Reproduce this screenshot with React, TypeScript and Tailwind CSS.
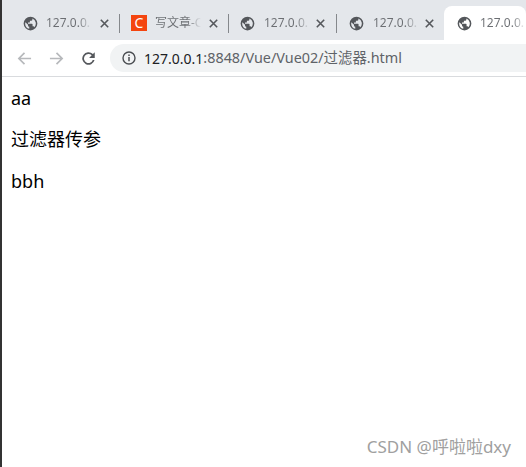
function Globe() {
  return (
    <svg width="15" height="15" viewBox="0 0 24 24" className="shrink-0">
      <path
        fill="#54575b"
        d="M12 1a11 11 0 1 0 0 22 11 11 0 0 0 0-22zM3.500 12c0-.8.1-1.500.3-2.200L8 14v1a2 2 0 0 0 2 2v3.400A8.500 8.500 0 0 1 3.500 12zm14.700 5.800a2 2 0 0 0-1.900-1.300h-1v-3a1 1 0 0 0-1-1H8v-2h2a1 1 0 0 0 1-1v-2h2a2 2 0 0 0 2-2V4.100a8.500 8.500 0 0 1 3.200 13.700z"
      />
    </svg>
  );
}

function CloseX() {
  return (
    <svg width="9" height="9" viewBox="0 0 9 9" className="shrink-0">
      <path d="M.8.8l7.400 7.400M8.200.8L.8 8.200" stroke="#55585c" strokeWidth="1.600" fill="none" />
    </svg>
  );
}

function TabTitle({ text, className }: { text: string; className: string }) {
  return (
    <span
      className={`whitespace-nowrap bg-gradient-to-r from-[#6b6e72] from-70% to-transparent bg-clip-text text-[12px] text-transparent ${className}`}
    >
      {text}
    </span>
  );
}

function Divider() {
  return <div className="h-[19px] w-px shrink-0 self-center bg-[#85888c]" />;
}

export default function App() {
  return (
    <div className="flex h-[467px] w-[526px] flex-col overflow-hidden border-l-2 border-[#333333] bg-white font-['Noto_Sans','Noto_Sans_CJK_SC',sans-serif]">
      <div className="flex h-[40px] bg-[#e4e7eb] pt-[6px]">
        <div className="flex w-[117px] items-center pl-[21px]">
          <Globe />
          <TabTitle text="127.0.0." className="ml-[8px] w-[46px]" />
          <span className="ml-[8px] flex"><CloseX /></span>
        </div>
        <Divider />
        <div className="flex w-[108px] items-center pl-[11px]">
          <div className="flex h-[16px] w-[16px] shrink-0 items-center justify-center bg-[#f4450f] text-[14px] leading-none text-white">C</div>
          <TabTitle text="写文章-C" className="ml-[8px] w-[46px] overflow-hidden" />
          <span className="ml-[8px] flex"><CloseX /></span>
        </div>
        <Divider />
        <div className="flex w-[107px] items-center pl-[11px]">
          <Globe />
          <TabTitle text="127.0.0." className="ml-[9px] w-[46px]" />
          <span className="ml-[6px] flex"><CloseX /></span>
        </div>
        <Divider />
        <div className="flex w-[107px] items-center pl-[12px]">
          <Globe />
          <TabTitle text="127.0.0." className="ml-[9px] w-[46px]" />
          <span className="ml-[6px] flex"><CloseX /></span>
        </div>
        <div className="flex flex-1 items-center rounded-t-[8px] bg-white pl-[13px]">
          <Globe />
          <TabTitle text="127.0.0." className="ml-[8px] w-[46px]" />
        </div>
      </div>
      <div className="flex h-[37px] items-center border-b border-[#d9dbde] bg-white">
        <svg width="15" height="15" viewBox="0 0 16 16" className="ml-[15px]">
          <path d="M15 8H2M8 2L2 8l6 6" stroke="#b7b9bc" strokeWidth="1.800" fill="none" />
        </svg>
        <svg width="15" height="15" viewBox="0 0 16 16" className="ml-[17px]">
          <path d="M1 8h13M8 2l6 6-6 6" stroke="#b7b9bc" strokeWidth="1.800" fill="none" />
        </svg>
        <svg width="15" height="15" viewBox="0 0 24 24" className="ml-[17px]">
          <path
            fill="#55585c"
            d="M19.100 4.900A10 10 0 1 0 21.700 14.500h-2.900a7.200 7.200 0 1 1-1.700-7.600L13 11h9V2z"
          />
        </svg>
        <div className="ml-[14px] flex h-[28px] flex-1 items-center rounded-l-full bg-[#f1f3f4] pl-[12px]">
          <svg width="14" height="14" viewBox="0 0 14 14">
            <circle cx="7" cy="7" r="6" stroke="#4b4e52" strokeWidth="1.400" fill="none" />
            <path d="M7 6v4.200M7 3.500v1.500" stroke="#4b4e52" strokeWidth="1.500" />
          </svg>
          <span className="ml-[8px] whitespace-nowrap text-[14px] text-[#202124]">127.0.0.1</span>
          <span className="whitespace-nowrap text-[14.4px] text-[#5f6368]">:8848/Vue/Vue02/过滤器.html</span>
        </div>
      </div>
      <div className="relative flex-1 pl-[9px] text-[18px] leading-[24px] text-black">
        <p className="mt-[9px]">aa</p>
        <p className="mt-[17px]">过滤器传参</p>
        <p className="mt-[18px]">bbh</p>
        <span className="absolute bottom-[10px] right-[15px] whitespace-nowrap text-[17px] leading-[20px] text-[#a0a0a0]">CSDN @呼啦啦dxy</span>
      </div>
    </div>
  );
}
